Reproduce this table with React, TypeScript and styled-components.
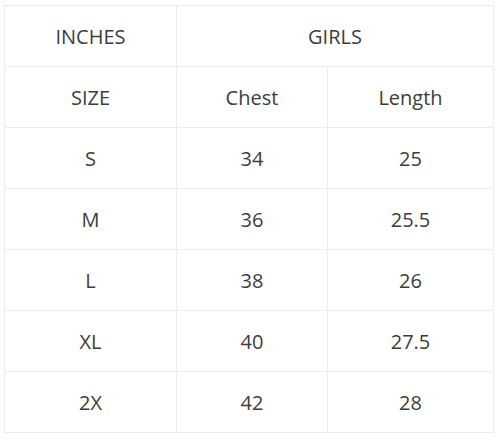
import styled, { createGlobalStyle } from 'styled-components';

const GlobalStyle = createGlobalStyle`
  body {
    margin: 0;
    background: #fff;
    font-family: "Open Sans", "Liberation Sans", sans-serif;
  }
`;

const Wrap = styled.div`
  padding: 5px 0 0 4px;
`;

const SizeTable = styled.table`
  border-collapse: collapse;
  width: 489px;
  table-layout: fixed;
  color: #3d3d3d;
  font-size: 20px;
`;

const Cell = styled.td`
  border: 1px solid #ececec;
  height: 60px;
  padding: 0;
  text-align: center;
  vertical-align: middle;
`;

const rows: [string, string, string][] = [
  ['S', '34', '25'],
  ['M', '36', '25.5'],
  ['L', '38', '26'],
  ['XL', '40', '27.5'],
  ['2X', '42', '28'],
];

export default function App() {
  return (
    <Wrap>
      <GlobalStyle />
      <SizeTable>
        <colgroup>
          <col style={{ width: 172 }} />
          <col style={{ width: 151 }} />
          <col style={{ width: 166 }} />
        </colgroup>
        <tbody>
          <tr>
            <Cell>INCHES</Cell>
            <Cell colSpan={2}>GIRLS</Cell>
          </tr>
          <tr>
            <Cell>SIZE</Cell>
            <Cell>Chest</Cell>
            <Cell>Length</Cell>
          </tr>
          {rows.map(([size, chest, length]) => (
            <tr key={size}>
              <Cell>{size}</Cell>
              <Cell>{chest}</Cell>
              <Cell>{length}</Cell>
            </tr>
          ))}
        </tbody>
      </SizeTable>
    </Wrap>
  );
}
